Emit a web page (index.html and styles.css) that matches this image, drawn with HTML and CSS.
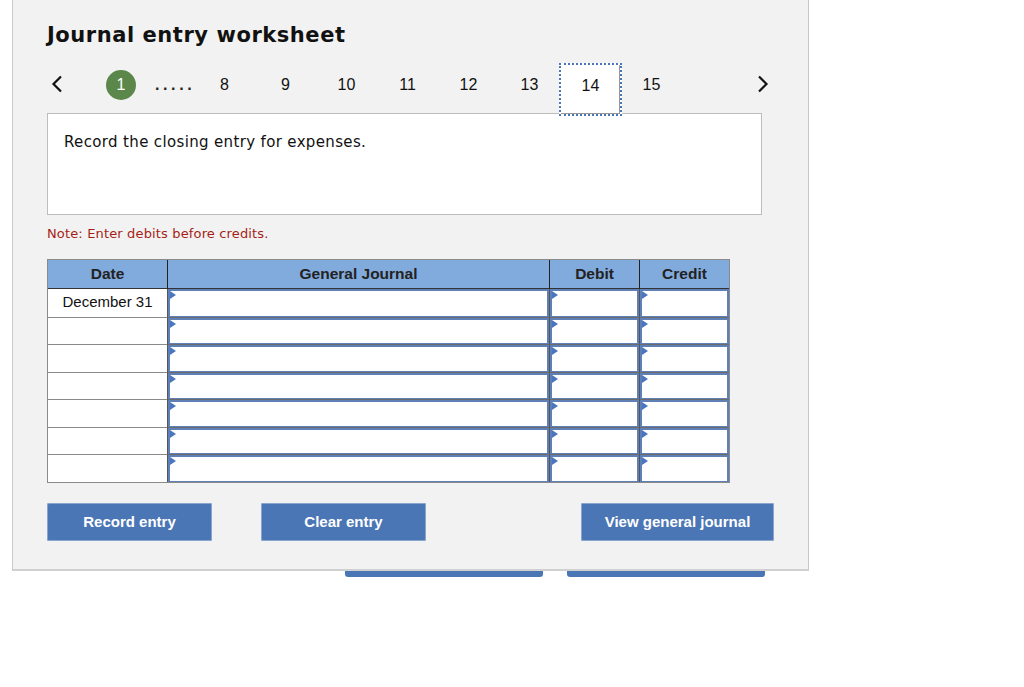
FILE: index.html
```html
<!DOCTYPE html>
<html>
<head>
<meta charset="utf-8">
<link rel="stylesheet" href="styles.css">
</head>
<body>
<div class="panel">
  <h1 class="title">Journal entry worksheet</h1>
  <div class="pager">
    <div class="arrow prev"><svg width="12" height="18" viewBox="0 0 12 18"><path d="M10 1.5 L2.5 9 L10 16.5" fill="none" stroke="#111" stroke-width="2.2"/></svg></div>
    <div class="circle">1</div>
    <div class="dots">.....</div>
    <div class="num">8</div>
    <div class="num">9</div>
    <div class="num">10</div>
    <div class="num">11</div>
    <div class="num">12</div>
    <div class="num">13</div>
    <div class="num active">14</div>
    <div class="num">15</div>
    <div class="arrow next"><svg width="12" height="18" viewBox="0 0 12 18"><path d="M2 1.5 L9.5 9 L2 16.5" fill="none" stroke="#111" stroke-width="2.2"/></svg></div>
  </div>
  <div class="question">Record the closing entry for expenses.</div>
  <div class="note">Note: Enter debits before credits.</div>
  <div class="journal">
    <div class="hcell">Date</div>
    <div class="hcell">General Journal</div>
    <div class="hcell">Debit</div>
    <div class="hcell">Credit</div>

    <div class="dcell">December 31</div><div class="icell"></div><div class="icell"></div><div class="icell"></div>
    <div class="dcell"></div><div class="icell"></div><div class="icell"></div><div class="icell"></div>
    <div class="dcell"></div><div class="icell"></div><div class="icell"></div><div class="icell"></div>
    <div class="dcell"></div><div class="icell"></div><div class="icell"></div><div class="icell"></div>
    <div class="dcell"></div><div class="icell"></div><div class="icell"></div><div class="icell"></div>
    <div class="dcell"></div><div class="icell"></div><div class="icell"></div><div class="icell"></div>
    <div class="dcell"></div><div class="icell"></div><div class="icell"></div><div class="icell"></div>
  </div>
  <div class="buttons">
    <button class="btn btn-record">Record entry</button>
    <button class="btn btn-clear">Clear entry</button>
    <button class="btn btn-view">View general journal</button>
  </div>
</div>
<div class="under">
  <div class="bar"></div>
  <div class="bar"></div>
</div>
</body>
</html>
```
FILE: styles.css
```css
html, body {
  margin: 0;
  padding: 0;
  background: #ffffff;
}
body {
  font-family: "DejaVu Sans", Verdana, sans-serif;
  color: #111;
}
.panel {
  margin-left: 12px;
  width: 797px;
  height: 571px;
  box-sizing: border-box;
  background: #f2f2f2;
  border: 1px solid #c9c9c9;
  border-top: none;
  border-bottom: 2px solid #d0d0d0;
  padding-left: 34px;
  position: relative;
  z-index: 1;
}
.title {
  margin: 0;
  padding-top: 23px;
  font-size: 21px;
  line-height: 24px;
  font-weight: bold;
  letter-spacing: 0.55px;
  color: #111;
}
.pager {
  display: flex;
  align-items: flex-start;
  height: 22px;
  margin-top: 27px;
  font-family: "Liberation Sans", Arial, sans-serif;
  font-size: 16px;
  line-height: 22px;
  color: #111;
}
.arrow {
  width: 20px;
  height: 22px;
  display: flex;
  align-items: center;
  justify-content: center;
}
.prev { margin-top: -1px; }
.next { margin-left: 71px; margin-top: -1px; }
.circle {
  margin-left: 39px;
  margin-top: -4px;
  width: 30px;
  height: 30px;
  border-radius: 50%;
  background: #5b874a;
  color: #fff;
  text-align: center;
  line-height: 30px;
  font-size: 16px;
}
.dots {
  width: 39px;
  padding-left: 19px;
  font-weight: bold;
  letter-spacing: 3.6px;
  font-size: 16px;
  color: #222;
}
.num {
  width: 61px;
  text-align: center;
}
.num.active {
  box-sizing: border-box;
  width: 63px;
  margin-left: -1px;
  margin-right: -1px;
  height: 53px;
  margin-top: -11px;
  padding-top: 10px;
  background: #fff;
  border: 2px dotted #4a76b5;
  box-shadow: inset -1px -1px 0 #999;
  position: relative;
  z-index: 2;
}
.question {
  margin-top: 17px;
  width: 715px;
  height: 102px;
  box-sizing: border-box;
  background: #fff;
  border: 1px solid #bdbdbd;
  padding: 19px 0 0 16px;
  font-size: 15px;
  line-height: 18px;
  letter-spacing: 0.35px;
  color: #111;
}
.note {
  margin-top: 11px;
  font-size: 13px;
  line-height: 16px;
  letter-spacing: 0.15px;
  color: #a51f17;
}
.journal {
  margin-top: 17px;
  display: grid;
  grid-template-columns: 119px 382px 90px 90px;
  grid-template-rows: 29px repeat(7, 27.5px);
  width: 681px;
  box-sizing: content-box;
  border: 1px solid #8a8a8a;
  font-family: "Liberation Sans", Arial, sans-serif;
  background: #fff;
}
.hcell {
  background: #82abdd;
  font-weight: bold;
  font-size: 15.5px;
  color: #222;
  text-align: center;
  line-height: 28px;
  border-bottom: 1px solid #333;
  border-left: 1px solid #222;
}
.hcell:first-child { border-left: none; }
.dcell {
  background: #fff;
  border-top: 1px solid #8a8a8a;
  font-size: 15px;
  line-height: 26px;
  text-align: center;
  color: #111;
}
.journal .dcell:nth-child(5) { border-top: none; }
.icell {
  position: relative;
  background: #fff;
  border-left: 1px solid #555;
  border-top: 1px solid #6b6b6b;
  box-shadow: inset 2px 2px 0 #5f80b6, inset -2px -1px 0 #5f80b6;
}
.journal .icell:nth-child(6),
.journal .icell:nth-child(7),
.journal .icell:nth-child(8) { border-top: none; }
.icell::before {
  content: "";
  position: absolute;
  left: 2px;
  top: 2px;
  width: 0;
  height: 0;
  border-top: 4px solid transparent;
  border-bottom: 4px solid transparent;
  border-left: 6px solid #4a76c0;
}
.buttons {
  display: flex;
  margin-top: 20px;
}
.btn {
  height: 38px;
  border: none;
  border-radius: 2px;
  background: #4a76b5;
  color: #fff;
  font-family: "Liberation Sans", Arial, sans-serif;
  font-weight: bold;
  font-size: 15px;
  padding: 0;
  box-shadow: 0 0 0 1px #8aa6cf inset;
}
.btn-record { width: 165px; }
.btn-clear { width: 165px; margin-left: 49px; }
.btn-view { width: 193px; margin-left: 155px; }
.under {
  display: flex;
  gap: 24px;
  margin-left: 345px;
  margin-top: -2px;
}
.bar {
  width: 198px;
  height: 8px;
  background: #4a76b5;
  border-radius: 0 0 3px 3px;
}
```
